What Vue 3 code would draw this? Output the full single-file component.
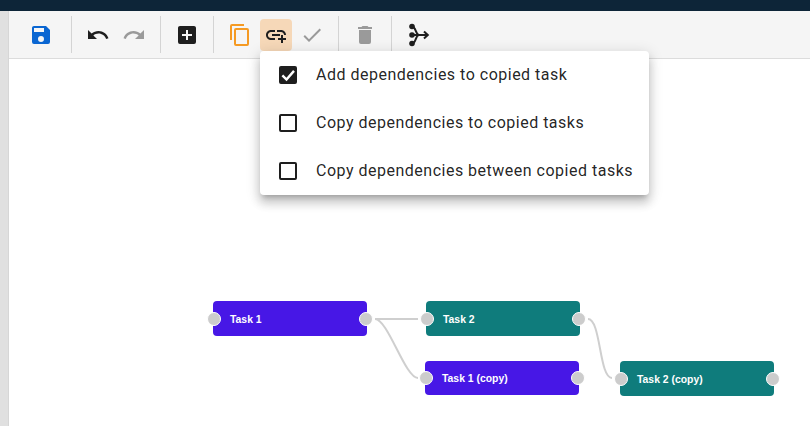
<template>
  <div class="page">
    <div class="topbar"></div>
    <div class="main">
      <div class="side"></div>
      <div class="content">
        <div class="toolbar">
          <button class="tool save">
            <svg viewBox="0 0 24 24"><path :d="icons.save" /></svg>
          </button>
          <span class="sep first"></span>
          <button class="tool">
            <svg viewBox="0 0 24 24"><path :d="icons.undo" /></svg>
          </button>
          <button class="tool off">
            <svg viewBox="0 0 24 24"><path :d="icons.redo" /></svg>
          </button>
          <span class="sep"></span>
          <button class="tool">
            <svg viewBox="0 0 24 24"><path :d="icons.add" /></svg>
          </button>
          <span class="sep"></span>
          <button class="tool copy">
            <svg viewBox="0 0 24 24"><path :d="icons.copy" /></svg>
          </button>
          <button class="tool active">
            <svg viewBox="0 0 24 24"><path :d="icons.link" /></svg>
          </button>
          <button class="tool off">
            <svg viewBox="0 0 24 24"><path :d="icons.check" /></svg>
          </button>
          <span class="sep"></span>
          <button class="tool off">
            <svg viewBox="0 0 24 24"><path :d="icons.trash" /></svg>
          </button>
          <span class="sep"></span>
          <button class="tool">
            <svg viewBox="0 0 24 24">
              <circle cx="6" cy="3.5" r="2.8" />
              <circle cx="6" cy="12" r="2.8" />
              <circle cx="6" cy="20.5" r="2.8" />
              <path class="line" d="M6 3.5C10 3.5 9.5 12 13 12M6 20.5C10 20.5 9.5 12 13 12M6 12H21M18 8.5L21.8 12L18 15.5" />
            </svg>
          </button>
        </div>

        <div class="canvas">
          <svg class="edges" viewBox="0 0 801 367">
            <path v-for="e in edges" :key="e" :d="e" />
          </svg>
          <div
            v-for="n in nodes"
            :key="n.label"
            class="node"
            :class="n.kind"
            :style="{ left: n.x + 'px', top: n.y + 'px', height: n.h + 'px' }"
          >
            <span class="port left"></span>
            <span class="label">{{ n.label }}</span>
            <span class="port right"></span>
          </div>
        </div>

        <div class="menu">
          <label v-for="o in options" :key="o.text" class="option">
            <span class="box" :class="{ checked: o.checked }">
              <svg v-if="o.checked" viewBox="0 0 24 24"><path d="M4.5 12.5L10 18L20 6.5" /></svg>
            </span>
            <span class="text">{{ o.text }}</span>
          </label>
        </div>
      </div>
    </div>
  </div>
</template>

<script setup>
const icons = {
  save: 'M15,9H5V5H15M12,19A3,3 0 0,1 9,16A3,3 0 0,1 12,13A3,3 0 0,1 15,16A3,3 0 0,1 12,19M17,3H5C3.89,3 3,3.9 3,5V19A2,2 0 0,0 5,21H19A2,2 0 0,0 21,19V7L17,3Z',
  undo: 'M12.5,8C9.85,8 7.45,9 5.6,10.6L2,7V16H11L7.38,12.38C8.77,11.22 10.54,10.5 12.5,10.5C16.04,10.5 19.05,12.81 20.1,16L22.47,15.22C21.08,11.03 17.15,8 12.5,8Z',
  redo: 'M18.4,10.6C16.55,9 14.15,8 11.5,8C6.85,8 2.92,11.03 1.54,15.22L3.9,16C4.95,12.81 7.95,10.5 11.5,10.5C13.45,10.5 15.23,11.22 16.62,12.38L13,16H22V7L18.4,10.6Z',
  add: 'M17,13H13V17H11V13H7V11H11V7H13V11H17M19,3H5C3.89,3 3,3.89 3,5V19A2,2 0 0,0 5,21H19A2,2 0 0,0 21,19V5C21,3.89 20.1,3 19,3Z',
  copy: 'M19,21H8V7H19M19,5H8A2,2 0 0,0 6,7V21A2,2 0 0,0 8,23H19A2,2 0 0,0 21,21V7A2,2 0 0,0 19,5M16,1H4A2,2 0 0,0 2,3V17H4V3H16V1Z',
  link: 'M8 11H16V13H8V11M20.1 12H22C22 9.2 19.8 7 17 7H13V8.9H17C18.7 8.9 20.1 10.3 20.1 12M3.9 12C3.9 10.3 5.3 8.9 7 8.9H11V7H7C4.2 7 2 9.2 2 12S4.2 17 7 17H11V15.1H7C5.3 15.1 3.9 13.7 3.9 12M19 12H17V15H14V17H17V20H19V17H22V15H19V12Z',
  check: 'M21,7L9,19L3.5,13.5L4.91,12.09L9,16.17L19.59,5.59L21,7Z',
  trash: 'M19,4H15.5L14.5,3H9.5L8.5,4H5V6H19M6,19A2,2 0 0,0 8,21H16A2,2 0 0,0 18,19V7H6V19Z'
}

// node and edge coordinates are relative to the canvas
const nodes = [
  { label: 'Task 1', kind: 'purple', x: 204, y: 242, h: 35 },
  { label: 'Task 2', kind: 'teal', x: 417, y: 242, h: 35 },
  { label: 'Task 1 (copy)', kind: 'purple', x: 416, y: 302, h: 34 },
  { label: 'Task 2 (copy)', kind: 'teal', x: 611, y: 302, h: 35 }
]

const edges = [
  'M366 260H409',
  'M366 260C379 260 396 319 409 319',
  'M579 260C592 260 590 319 603 319'
]

const options = [
  { text: 'Add dependencies to copied task', checked: true },
  { text: 'Copy dependencies to copied tasks', checked: false },
  { text: 'Copy dependencies between copied tasks', checked: false }
]
</script>

<style scoped>
.page {
  width: 810px;
  height: 426px;
  display: flex;
  flex-direction: column;
  overflow: hidden;
  background: #fff;
  font-family: Roboto, "Liberation Sans", sans-serif;
}

.topbar {
  height: 11px;
  background: #0d2538;
}

.main {
  flex: 1;
  display: flex;
  min-height: 0;
}

.side {
  width: 8px;
  background: #e0e0e0;
  border-right: 1px solid #d6d6d6;
}

.content {
  flex: 1;
  position: relative;
  display: flex;
  flex-direction: column;
}

.toolbar {
  height: 47px;
  box-sizing: content-box;
  display: flex;
  align-items: center;
  gap: 4px;
  padding-left: 16px;
  background: #f5f5f5;
  border-bottom: 1px solid #dcdcdc;
}

.tool {
  width: 32px;
  height: 32px;
  padding: 0;
  border: none;
  border-radius: 4px;
  background: transparent;
  display: flex;
  align-items: center;
  justify-content: center;
  fill: #1e1e1e;
}

.tool svg {
  width: 24px;
  height: 24px;
}

.tool .line {
  fill: none;
  stroke: #1e1e1e;
  stroke-width: 2;
}

.save {
  fill: #0a66d2;
}

.copy {
  fill: #f59a23;
}

.off {
  fill: #9a9a9a;
}

.active {
  background: #f6d8b8;
}

.sep {
  width: 1px;
  height: 37px;
  margin: 0 6px;
  background: #d4d4d4;
}

.sep.first {
  margin-left: 10px;
}

.canvas {
  flex: 1;
  position: relative;
}

.edges {
  position: absolute;
  left: 0;
  top: 0;
  width: 801px;
  height: 367px;
  fill: none;
  stroke: #cfcfcf;
  stroke-width: 2;
}

.node {
  position: absolute;
  width: 154px;
  border-radius: 4px;
  display: flex;
  align-items: center;
  padding-left: 17px;
  box-sizing: border-box;
  color: #fff;
  font-family: "Liberation Sans", Arial, sans-serif;
  font-size: 10.4px;
  font-weight: 700;
}

.label {
  margin-top: 1px;
}

.purple {
  background: #4717e6;
}

.teal {
  background: #0f7c7c;
}

.port {
  position: absolute;
  top: 50%;
  width: 12px;
  height: 12px;
  box-sizing: content-box;
  margin-top: -7px;
  border: 1.5px solid #fff;
  border-radius: 50%;
  background: #cccccc;
}

.port.left {
  left: -6px;
}

.port.right {
  right: -6px;
}

.menu {
  position: absolute;
  left: 251px;
  top: 40px;
  width: 389px;
  background: #fff;
  border-radius: 4px;
  box-shadow: 0 5px 5px -3px rgba(0, 0, 0, 0.2), 0 8px 10px 1px rgba(0, 0, 0, 0.14), 0 3px 14px 2px rgba(0, 0, 0, 0.12);
}

.option {
  height: 48px;
  display: flex;
  align-items: center;
  gap: 19px;
  padding-left: 19px;
  font-size: 16px;
  letter-spacing: 0.5px;
  color: rgba(0, 0, 0, 0.87);
}

.text {
  margin-top: -2px;
}

.box {
  width: 18px;
  height: 18px;
  box-sizing: border-box;
  border: 2px solid #1e1e1e;
  border-radius: 2px;
  display: flex;
  align-items: center;
  justify-content: center;
}

.box.checked {
  background: #1e1e1e;
}

.box svg {
  flex: none;
  width: 18px;
  height: 18px;
  fill: none;
  stroke: #fff;
  stroke-width: 3.2;
}
</style>

<style>
body {
  margin: 0;
}
</style>
